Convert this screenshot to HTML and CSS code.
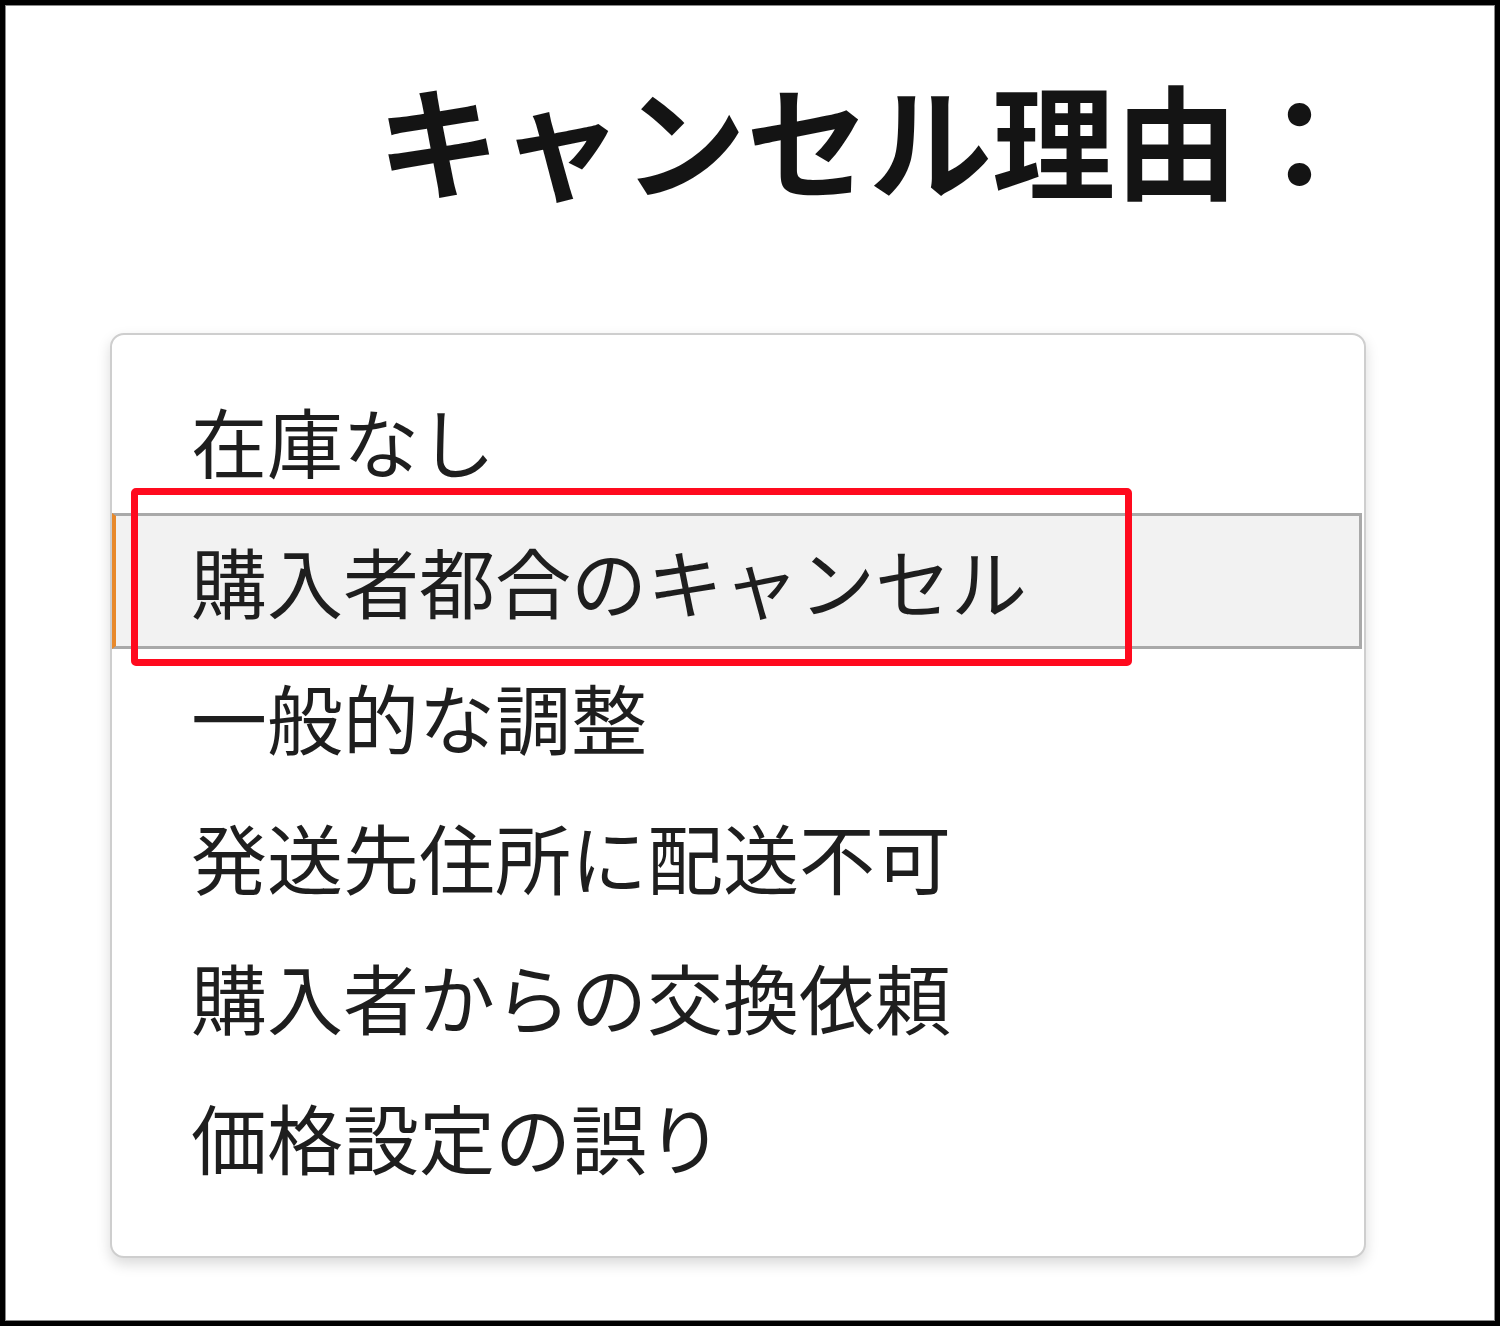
FILE: index.html
```html
<!DOCTYPE html>
<html lang="ja">
<head>
<meta charset="utf-8">
<link rel="stylesheet" href="styles.css">
</head>
<body>
<div class="frame">
  <h1 class="title">キャンセル理由：</h1>
  <div class="card">
    <ul class="list">
      <li class="item">在庫なし</li>
      <li class="item item-active">購入者都合のキャンセル</li>
      <li class="item">一般的な調整</li>
      <li class="item">発送先住所に配送不可</li>
      <li class="item">購入者からの交換依頼</li>
      <li class="item">価格設定の誤り</li>
    </ul>
    <div class="highlight-box"></div>
  </div>
</div>
</body>
</html>
```

FILE: styles.css
```css
html, body {
  margin: 0;
  padding: 0;
  background: #fff;
}

.frame {
  box-sizing: border-box;
  width: 1500px;
  height: 1326px;
  border: 5px solid #000;
  box-shadow: inset 0 0 0 1px #8a8a8a;
  background: #fff;
  padding-top: 70px;
  font-family: "Noto Sans CJK JP", "Noto Sans", sans-serif;
  color: #222;
}

.title {
  margin: 0 0 0 372px;
  font-size: 123px;
  line-height: 123px;
  font-weight: 700;
  color: #141414;
  letter-spacing: 0;
}

.card {
  position: relative;
  box-sizing: border-box;
  margin: 135px 0 0 105px;
  width: 1256px;
  height: 925px;
  border: 2px solid #cecece;
  border-radius: 14px;
  box-shadow: 0 6px 14px rgba(0, 0, 0, 0.15);
  padding: 40px 0 0 0;
  background: #fff;
}

.list {
  list-style: none;
  margin: 0;
  padding: 0;
}

.item {
  box-sizing: border-box;
  height: 140px;
  padding-left: 79px;
  font-size: 76px;
  line-height: 130px;
  color: #1e1e1e;
  white-space: nowrap;
}

.item-active {
  height: 136px;
  margin: -2px 0 2px 0;
  margin-right: 2px;
  background: #f2f2f2;
  border-top: 3px solid #a9a9a9;
  border-bottom: 3px solid #a9a9a9;
  border-right: 3px solid #a9a9a9;
  border-left: 4px solid #e8892b;
  padding-left: 75px;
  line-height: 128px;
}

.highlight-box {
  position: absolute;
  left: 19px;
  top: 153px;
  width: 1001px;
  height: 178px;
  box-sizing: border-box;
  border: 7px solid #ff0a1e;
  border-radius: 5px;
}
```
